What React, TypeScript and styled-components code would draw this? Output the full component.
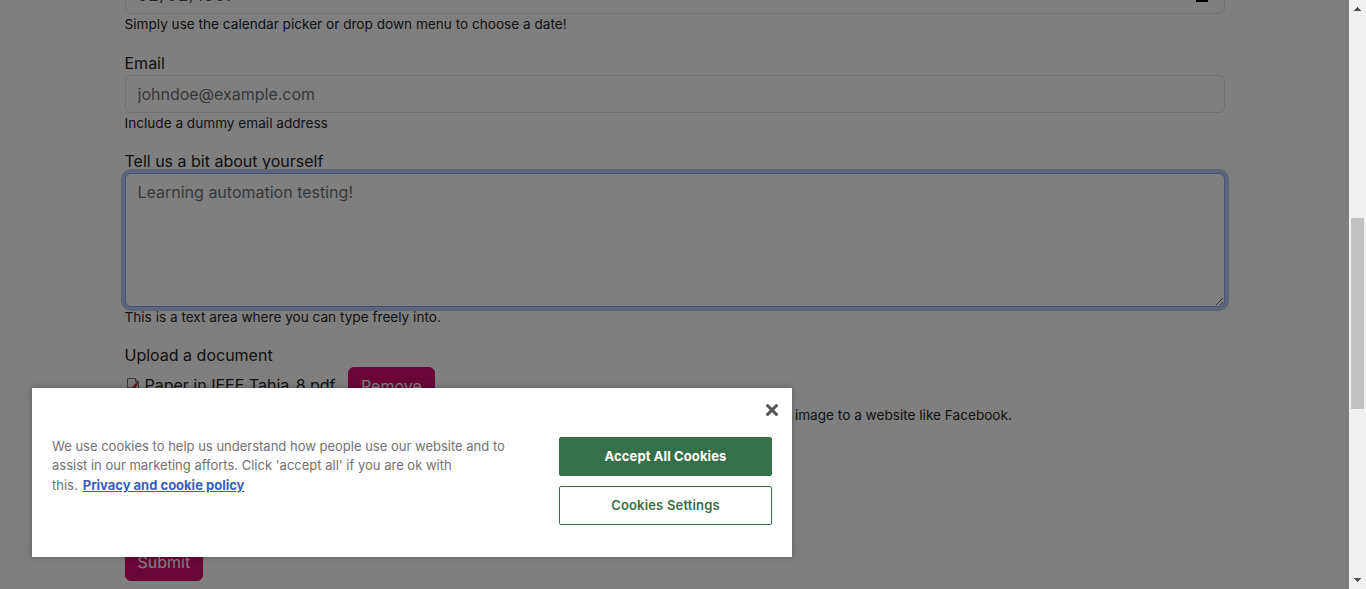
import React from "react";
import styled, { createGlobalStyle, css } from "styled-components";

const Global = createGlobalStyle`
  * { box-sizing: border-box; }
  html, body { margin: 0; height: 100%; overflow: hidden; background: #fff; }
  body, input, textarea, button { font-family: Inter, "Liberation Sans", sans-serif; }
`;

const Window = styled.div`
  position: relative;
  display: flex;
  width: 100%;
  height: 589px;
  overflow: hidden;
`;

const Page = styled.main`
  flex: 1;
  min-width: 0;
  height: 589px;
  overflow: hidden;
  padding: 0 124.5px;
  color: #212529;
  font-size: 16px;
  line-height: 24px;
`;

const Form = styled.form`
  display: flex;
  flex-direction: column;
  margin-top: -47.8px;
`;

const Group = styled.div`
  display: flex;
  flex-direction: column;
  margin-bottom: 16px;
`;

const Label = styled.label`
  height: 24px;
`;

const field = css`
  width: 100%;
  padding: 6px 12px;
  border: 1px solid #dee2e6;
  border-radius: 6px;
  background: #fff;
  color: #212529;
  font-size: 16px;
  line-height: 24px;
  outline: none;
  &::placeholder { color: #6b7075; opacity: 1; }
`;

const Input = styled.input`
  ${field}
  height: 38px;
`;

const DateField = styled.div`
  ${field}
  display: flex;
  align-items: center;
  justify-content: space-between;
  height: 38px;
  padding-right: 16px;
  color: #43474b;
  letter-spacing: 1.25px;
`;

const TextArea = styled.textarea`
  ${field}
  display: block;
  height: 134px;
  resize: vertical;
  color: #6b7075;
  border-color: #86a4f0;
  box-shadow: 0 0 0 4px #bdcaf0;
`;

const Hint = styled.div<{ $indent?: number }>`
  height: 20.4px;
  padding-left: ${(p) => p.$indent ?? 0}px;
  font-size: 13.6px;
  line-height: 20.4px;
  letter-spacing: 0.006px;
  white-space: nowrap;
`;

const FileRow = styled.div`
  display: flex;
  align-items: center;
  height: 38px;
`;

const FileName = styled.span`
  margin: 0 12.5px 2px 4px;
`;

const Button = styled.button`
  height: 38px;
  padding: 0 12px;
  border: 1px solid #d60b6d;
  border-radius: 6px;
  background: #d60b6d;
  color: #fff;
  font-size: 16px;
  line-height: 24px;
`;

const Actions = styled.div`
  display: flex;
  margin-top: 101.6px;
`;

const Scrollbar = styled.aside`
  display: flex;
  flex-direction: column;
  align-items: center;
  width: 17px;
  height: 589px;
  padding: 7px 0;
  background: #f1f1f1;
  svg { display: block; }
`;

const Track = styled.div`
  flex: 1;
  padding-top: 207px;
`;

const Thumb = styled.div`
  width: 13px;
  height: 191px;
  background: #c1c1c1;
`;

const Overlay = styled.div`
  position: absolute;
  inset: 0 17px 0 0;
  background: rgba(0, 0, 0, 0.5);
`;

const Banner = styled.section`
  position: absolute;
  left: 32px;
  bottom: 32px;
  display: flex;
  justify-content: space-between;
  width: 760px;
  height: 169px;
  padding: 49px 20px 0;
  background: #fff;
  box-shadow: 0 0 6px rgba(0, 0, 0, 0.3);
`;

const Notice = styled.p`
  width: 460px;
  margin: -0.4px 0 0;
  color: #727272;
  font-size: 13px;
  line-height: 19.5px;
`;

const Policy = styled.a`
  margin-left: 5px;
  color: #3860be;
  font-weight: 700;
  text-decoration: underline;
`;

const Choices = styled.div`
  display: flex;
  flex-direction: column;
  gap: 10px;
  width: 213px;
`;

const Choice = styled.button<{ $primary?: boolean }>`
  height: 39px;
  padding: 0 0 2px;
  border: 1px solid #366f4b;
  border-radius: 2px;
  background: ${(p) => (p.$primary ? "#366f4b" : "#fff")};
  color: ${(p) => (p.$primary ? "#fff" : "#366f4b")};
  font-size: 13px;
  font-weight: ${(p) => (p.$primary ? 700 : 600)};
  letter-spacing: ${(p) => (p.$primary ? 0.1 : 0.18)}px;
`;

const Close = styled.button`
  position: absolute;
  top: 16px;
  right: 14px;
  display: flex;
  padding: 0;
  border: 0;
  background: none;
`;

const CalendarIcon = () => (
  <svg width="12" height="14" viewBox="0 0 12 14" fill="none" stroke="#000" strokeWidth="2">
    <path d="M1 2h10v11H1zM1 4h10M3.5 0v3M8.5 0v3" />
  </svg>
);

const PdfIcon = () => (
  <svg width="16" height="16" viewBox="0 0 16 16">
    <path d="M2.5.5h8l3 3v12h-11z" fill="#f4f4f4" stroke="#777" />
    <path d="M10.5.5v3h3" fill="#ccc" stroke="#666" />
    <path d="M3 9.500c4 0 6-2 9.500-6.500v3.500C10 11.500 8 14 3 14.500z" fill="#d3222a" />
    <path d="M4.500 8l2.500-1 2 1-3 2z" fill="#f4f4f4" />
  </svg>
);

export default function App() {
  return (
    <Window>
      <Global />
      <Page>
        <Form>
          <Group>
            <Label />
            <DateField><span>02/02/1997</span><CalendarIcon /></DateField>
            <Hint>Simply use the calendar picker or drop down menu to choose a date!</Hint>
          </Group>
          <Group>
            <Label>Email</Label>
            <Input placeholder="johndoe@example.com" />
            <Hint>Include a dummy email address</Hint>
          </Group>
          <Group>
            <Label>Tell us a bit about yourself</Label>
            <TextArea defaultValue="Learning automation testing!" />
            <Hint>This is a text area where you can type freely into.</Hint>
          </Group>
          <Group>
            <Label>Upload a document</Label>
            <FileRow>
              <PdfIcon />
              <FileName>Paper in IEEE Tahia_8.pdf</FileName>
              <Button type="button">Remove</Button>
            </FileRow>
            <Hint $indent={670.4}>image to a website like Facebook.</Hint>
          </Group>
          <Actions><Button type="button">Submit</Button></Actions>
        </Form>
      </Page>
      <Scrollbar>
        <svg width="7" height="4" viewBox="0 0 7 4" shapeRendering="crispEdges"><path d="M3 0h1v1h1v1h1v1h1v1H0V3h1V2h1V1h1z" fill="#505050" /></svg>
        <Track><Thumb /></Track>
        <svg width="7" height="4" viewBox="0 0 7 4" shapeRendering="crispEdges"><path d="M0 0h7v1H6v1H5v1H4v1H3V3H2V2H1V1H0z" fill="#505050" /></svg>
      </Scrollbar>
      <Overlay />
      <Banner>
        <Notice>
          We use cookies to help us understand how people use our website and to assist in our marketing afforts. Click 'accept all' if you are ok with this.
          <Policy>Privacy and cookie policy</Policy>
        </Notice>
        <Choices>
          <Choice $primary>Accept All Cookies</Choice>
          <Choice>Cookies Settings</Choice>
        </Choices>
        <Close aria-label="Close">
          <svg width="12" height="12" viewBox="0 0 12 12" stroke="#565656" strokeWidth="3" strokeLinecap="round"><path d="M1.6 1.6l8.8 8.8M10.4 1.6l-8.8 8.8" /></svg>
        </Close>
      </Banner>
    </Window>
  );
}
